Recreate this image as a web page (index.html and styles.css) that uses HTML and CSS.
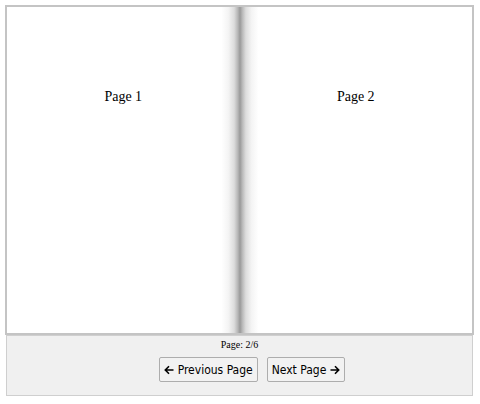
FILE: index.html
```html
<!DOCTYPE html>
<html>
<head>
<meta charset="utf-8">
<link rel="stylesheet" href="styles.css">
</head>
<body>
<div class="book">
  <div class="page page-left"><p class="page-label">Page 1</p></div>
  <div class="page page-right"><p class="page-label">Page 2</p></div>
</div>
<div class="controls">
  <div class="page-num">Page: 2/6</div>
  <div class="buttons">
    <button class="btn"><svg class="arrow" viewBox="0 0 10 10" width="10" height="10"><path d="M9.5 5H1.5M5 1.3L1.3 5L5 8.7" fill="none" stroke="#000" stroke-width="1.6"/></svg>Previous Page</button>
    <button class="btn">Next Page<svg class="arrow arrow-r" viewBox="0 0 10 10" width="10" height="10"><path d="M0.5 5H8.5M5 1.3L8.7 5L5 8.7" fill="none" stroke="#000" stroke-width="1.6"/></svg></button>
  </div>
</div>
</body>
</html>
```
FILE: styles.css
```css
html, body {
  margin: 0;
  padding: 0;
  background: #fff;
}
body {
  padding: 5px 0 0 5px;
  font-family: "Liberation Serif", serif;
}
.book {
  width: 465px;
  height: 326px;
  border: 2px solid #c4c4c4;
  box-shadow: inset 1px 1px 0 #e4e4e4, inset -1px -1px 0 #e4e4e4;
  display: flex;
  background: #fff;
}
.page {
  flex: 1;
  text-align: center;
}
.page-left {
  background: linear-gradient(to right, #fff 0%, #fff 92%, #f4f4f4 95%, #dcdcdc 97.5%, #b8b8b8 99%, #999 100%);
}
.page-right {
  background: linear-gradient(to left, #fff 0%, #fff 92%, #f4f4f4 95%, #dcdcdc 97.5%, #b8b8b8 99%, #999 100%);
}
.page-label {
  margin: 82px 0 0;
  font-size: 14px;
  color: #000;
}
.controls {
  margin-left: 1px;
  width: 465px;
  height: 59px;
  border: 1px solid #cfcfcf;
  background: #f0f0f0;
  display: flex;
  flex-direction: column;
  align-items: center;
}
.page-num {
  font-size: 10px;
  margin-top: 3px;
  line-height: 12px;
}
.buttons {
  display: flex;
  gap: 9px;
  margin-top: 6px;
  padding-left: 25px;
}
.btn {
  font-family: "DejaVu Sans Condensed", "DejaVu Sans", sans-serif;
  font-stretch: condensed;
  font-size: 12px;
  height: 25px;
  padding: 0 4px;
  background: #f2f2f2;
  border: 1px solid #adadad;
  border-radius: 2px;
  color: #000;
  display: flex;
  align-items: center;
}
.arrow {
  margin-right: 4px;
}
.arrow-r {
  margin-right: 0;
  margin-left: 4px;
}
```
